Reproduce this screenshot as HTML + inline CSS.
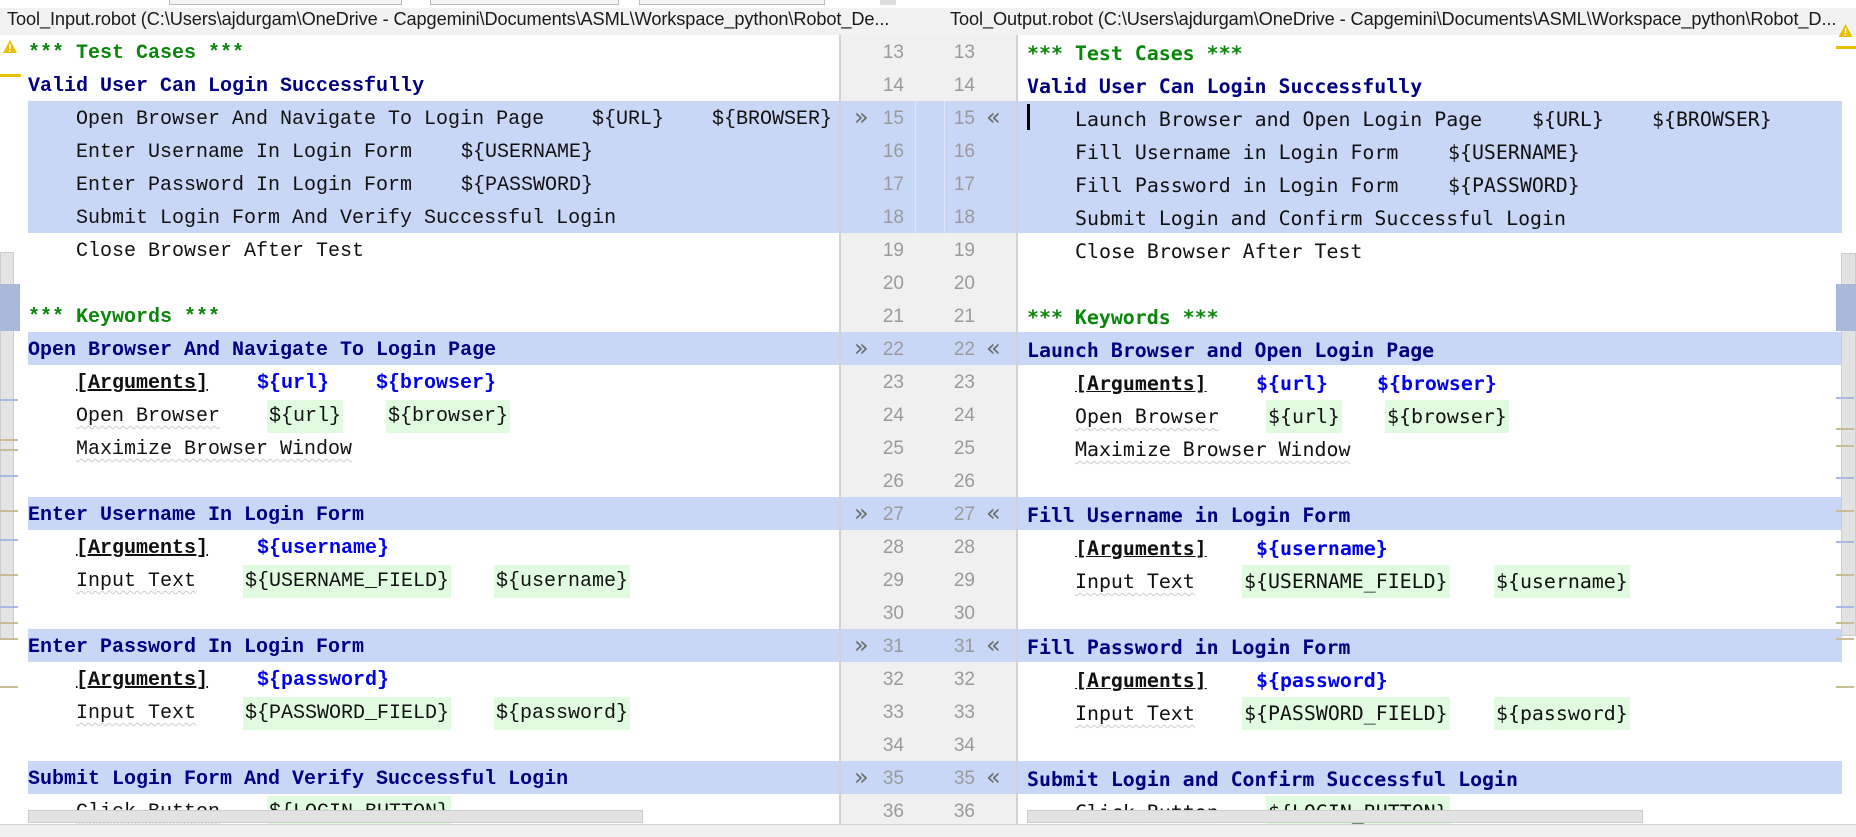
<!DOCTYPE html>
<html><head><meta charset="utf-8"><style>
*{margin:0;padding:0;box-sizing:border-box}
body{width:1856px;height:837px;overflow:hidden;background:#fff;position:relative;font-family:"Liberation Mono",monospace}
.abs{position:absolute}
.tb{position:absolute;top:0;height:5px;border:1px solid #bbb;border-top:none;background:#f4f4f4}
.title{position:absolute;top:8px;height:27px;background:#f2f2f2;width:1856px}
.tt{position:absolute;top:9px;font-family:"Liberation Sans",sans-serif;font-size:18.2px;color:#1a1a1a;white-space:nowrap;letter-spacing:-0.1px}
.hl{position:absolute;height:33px;background:#c9d7f6}
.t{position:absolute;top:0;height:33px;line-height:33px;font-size:20px;white-space:pre;color:#111;margin-top:2px}
.L{font-family:"Liberation Mono",monospace}
.R{font-family:"DejaVu Sans Mono","Liberation Mono",monospace;font-size:19.9px}
.g{color:#0a860a;font-weight:bold}
.n{color:#000080;font-weight:bold}
.b{color:#0000ee;font-weight:bold}
.a{font-weight:bold;text-decoration:underline}
.v{background:#e1fbe1;padding:0 2px;margin-left:-2px}
.w{text-decoration:underline wavy #ccc 1px;text-underline-offset:4px}
.num{position:absolute;height:33px;font-family:"Liberation Sans",sans-serif;font-size:19px;line-height:35px;color:#9a9a9a;text-align:right;width:32px}
.arr{position:absolute;height:33px;font-family:"DejaVu Sans",sans-serif;font-size:24px;line-height:32px;color:#6a6a6a}
.mk{position:absolute;height:2px;width:18px}
</style></head><body>

<div class="tb" style="left:169px;width:233px"></div>
<div class="tb" style="left:430px;width:189px"></div>
<div class="tb" style="left:639px;width:186px"></div>
<div class="tb" style="left:880px;width:16px;background:#ddd;border:none"></div>

<div class="title"></div>
<div class="tt" style="left:7px">Tool_Input.robot (C:\Users\ajdurgam\OneDrive - Capgemini\Documents\ASML\Workspace_python\Robot_De...</div>
<div class="tt" style="left:950px">Tool_Output.robot (C:\Users\ajdurgam\OneDrive - Capgemini\Documents\ASML\Workspace_python\Robot_D...</div>

<div class="abs" style="left:839px;top:35px;width:179px;height:789px;background:#f0f0f0"></div>

<div class="hl" style="left:28px;top:101px;width:1814px;height:132px"></div>
<div class="hl" style="left:28px;top:332px;width:1814px"></div>
<div class="hl" style="left:28px;top:497px;width:1814px"></div>
<div class="hl" style="left:28px;top:629px;width:1814px"></div>
<div class="hl" style="left:28px;top:761px;width:1814px"></div>
<div class="abs" style="left:915px;top:101px;width:1px;height:132px;background:#dde6fa"></div>
<div class="abs" style="left:944px;top:101px;width:1px;height:132px;background:#dde6fa"></div>
<div class="abs" style="left:839px;top:35px;width:2px;height:789px;background:#d2d2d2"></div>
<div class="abs" style="left:1016px;top:35px;width:2px;height:789px;background:#d2d2d2"></div>

<div class="num" style="left:872px;top:35px">13</div><div class="num" style="left:943px;top:35px">13</div>
<div class="num" style="left:872px;top:68px">14</div><div class="num" style="left:943px;top:68px">14</div>
<div class="num" style="left:872px;top:101px">15</div><div class="num" style="left:943px;top:101px">15</div>
<div class="num" style="left:872px;top:134px">16</div><div class="num" style="left:943px;top:134px">16</div>
<div class="num" style="left:872px;top:167px">17</div><div class="num" style="left:943px;top:167px">17</div>
<div class="num" style="left:872px;top:200px">18</div><div class="num" style="left:943px;top:200px">18</div>
<div class="num" style="left:872px;top:233px">19</div><div class="num" style="left:943px;top:233px">19</div>
<div class="num" style="left:872px;top:266px">20</div><div class="num" style="left:943px;top:266px">20</div>
<div class="num" style="left:872px;top:299px">21</div><div class="num" style="left:943px;top:299px">21</div>
<div class="num" style="left:872px;top:332px">22</div><div class="num" style="left:943px;top:332px">22</div>
<div class="num" style="left:872px;top:365px">23</div><div class="num" style="left:943px;top:365px">23</div>
<div class="num" style="left:872px;top:398px">24</div><div class="num" style="left:943px;top:398px">24</div>
<div class="num" style="left:872px;top:431px">25</div><div class="num" style="left:943px;top:431px">25</div>
<div class="num" style="left:872px;top:464px">26</div><div class="num" style="left:943px;top:464px">26</div>
<div class="num" style="left:872px;top:497px">27</div><div class="num" style="left:943px;top:497px">27</div>
<div class="num" style="left:872px;top:530px">28</div><div class="num" style="left:943px;top:530px">28</div>
<div class="num" style="left:872px;top:563px">29</div><div class="num" style="left:943px;top:563px">29</div>
<div class="num" style="left:872px;top:596px">30</div><div class="num" style="left:943px;top:596px">30</div>
<div class="num" style="left:872px;top:629px">31</div><div class="num" style="left:943px;top:629px">31</div>
<div class="num" style="left:872px;top:662px">32</div><div class="num" style="left:943px;top:662px">32</div>
<div class="num" style="left:872px;top:695px">33</div><div class="num" style="left:943px;top:695px">33</div>
<div class="num" style="left:872px;top:728px">34</div><div class="num" style="left:943px;top:728px">34</div>
<div class="num" style="left:872px;top:761px">35</div><div class="num" style="left:943px;top:761px">35</div>
<div class="num" style="left:872px;top:794px">36</div><div class="num" style="left:943px;top:794px">36</div>

<div class="arr" style="left:854px;top:101px">»</div><div class="arr" style="left:986px;top:101px">«</div>
<div class="arr" style="left:854px;top:332px">»</div><div class="arr" style="left:986px;top:332px">«</div>
<div class="arr" style="left:854px;top:497px">»</div><div class="arr" style="left:986px;top:497px">«</div>
<div class="arr" style="left:854px;top:629px">»</div><div class="arr" style="left:986px;top:629px">«</div>
<div class="arr" style="left:854px;top:761px">»</div><div class="arr" style="left:986px;top:761px">«</div>

<div class="t L g" style="left:28px;top:35px">*** Test Cases ***</div>
<div class="t L n" style="left:28px;top:68px">Valid User Can Login Successfully</div>
<div class="t L" style="left:76px;top:101px">Open Browser And Navigate To Login Page</div>
<div class="t L" style="left:592px;top:101px">${URL}</div>
<div class="t L" style="left:712px;top:101px">${BROWSER}</div>
<div class="t L" style="left:76px;top:134px">Enter Username In Login Form</div>
<div class="t L" style="left:461px;top:134px">${USERNAME}</div>
<div class="t L" style="left:76px;top:167px">Enter Password In Login Form</div>
<div class="t L" style="left:461px;top:167px">${PASSWORD}</div>
<div class="t L" style="left:76px;top:200px">Submit Login Form And Verify Successful Login</div>
<div class="t L" style="left:76px;top:233px">Close Browser After Test</div>
<div class="t L g" style="left:28px;top:299px">*** Keywords ***</div>
<div class="t L n" style="left:28px;top:332px">Open Browser And Navigate To Login Page</div>
<div class="t L a" style="left:76px;top:365px">[Arguments]</div>
<div class="t L b" style="left:257px;top:365px">${url}</div>
<div class="t L b" style="left:376px;top:365px">${browser}</div>
<div class="t L w" style="left:76px;top:398px">Open Browser</div>
<div class="t L v" style="left:269px;top:398px">${url}</div>
<div class="t L v" style="left:388px;top:398px">${browser}</div>
<div class="t L w" style="left:76px;top:431px">Maximize Browser Window</div>
<div class="t L n" style="left:28px;top:497px">Enter Username In Login Form</div>
<div class="t L a" style="left:76px;top:530px">[Arguments]</div>
<div class="t L b" style="left:257px;top:530px">${username}</div>
<div class="t L w" style="left:76px;top:563px">Input Text</div>
<div class="t L v" style="left:245px;top:563px">${USERNAME_FIELD}</div>
<div class="t L v" style="left:496px;top:563px">${username}</div>
<div class="t L n" style="left:28px;top:629px">Enter Password In Login Form</div>
<div class="t L a" style="left:76px;top:662px">[Arguments]</div>
<div class="t L b" style="left:257px;top:662px">${password}</div>
<div class="t L w" style="left:76px;top:695px">Input Text</div>
<div class="t L v" style="left:245px;top:695px">${PASSWORD_FIELD}</div>
<div class="t L v" style="left:496px;top:695px">${password}</div>
<div class="t L n" style="left:28px;top:761px">Submit Login Form And Verify Successful Login</div>
<div class="t L w" style="left:76px;top:794px">Click Button</div>
<div class="t L v" style="left:269px;top:794px">${LOGIN_BUTTON}</div>

<div class="t R g" style="left:1027px;top:35px">*** Test Cases ***</div>
<div class="t R n" style="left:1027px;top:68px">Valid User Can Login Successfully</div>
<div class="abs" style="left:1027px;top:104px;width:3px;height:26px;background:#000"></div>
<div class="t R" style="left:1075px;top:101px">Launch Browser and Open Login Page</div>
<div class="t R" style="left:1532px;top:101px">${URL}</div>
<div class="t R" style="left:1652px;top:101px">${BROWSER}</div>
<div class="t R" style="left:1075px;top:134px">Fill Username in Login Form</div>
<div class="t R" style="left:1448px;top:134px">${USERNAME}</div>
<div class="t R" style="left:1075px;top:167px">Fill Password in Login Form</div>
<div class="t R" style="left:1448px;top:167px">${PASSWORD}</div>
<div class="t R" style="left:1075px;top:200px">Submit Login and Confirm Successful Login</div>
<div class="t R" style="left:1075px;top:233px">Close Browser After Test</div>
<div class="t R g" style="left:1027px;top:299px">*** Keywords ***</div>
<div class="t R n" style="left:1027px;top:332px">Launch Browser and Open Login Page</div>
<div class="t R a" style="left:1075px;top:365px">[Arguments]</div>
<div class="t R b" style="left:1256px;top:365px">${url}</div>
<div class="t R b" style="left:1377px;top:365px">${browser}</div>
<div class="t R w" style="left:1075px;top:398px">Open Browser</div>
<div class="t R v" style="left:1268px;top:398px">${url}</div>
<div class="t R v" style="left:1387px;top:398px">${browser}</div>
<div class="t R w" style="left:1075px;top:431px">Maximize Browser Window</div>
<div class="t R n" style="left:1027px;top:497px">Fill Username in Login Form</div>
<div class="t R a" style="left:1075px;top:530px">[Arguments]</div>
<div class="t R b" style="left:1256px;top:530px">${username}</div>
<div class="t R w" style="left:1075px;top:563px">Input Text</div>
<div class="t R v" style="left:1244px;top:563px">${USERNAME_FIELD}</div>
<div class="t R v" style="left:1496px;top:563px">${username}</div>
<div class="t R n" style="left:1027px;top:629px">Fill Password in Login Form</div>
<div class="t R a" style="left:1075px;top:662px">[Arguments]</div>
<div class="t R b" style="left:1256px;top:662px">${password}</div>
<div class="t R w" style="left:1075px;top:695px">Input Text</div>
<div class="t R v" style="left:1244px;top:695px">${PASSWORD_FIELD}</div>
<div class="t R v" style="left:1496px;top:695px">${password}</div>
<div class="t R n" style="left:1027px;top:761px">Submit Login and Confirm Successful Login</div>
<div class="t R w" style="left:1075px;top:794px">Click Button</div>
<div class="t R v" style="left:1268px;top:794px">${LOGIN_BUTTON}</div>

<svg class="abs" style="left:2px;top:39px" width="16" height="15" viewBox="0 0 16 15"><path d="M8 1 L15 14 L1 14 Z" fill="#e8c000"/><rect x="7.2" y="5" width="1.6" height="5" fill="#fff"/><rect x="7.2" y="11" width="1.6" height="1.6" fill="#fff"/></svg>
<div class="abs" style="left:0;top:74px;width:21px;height:3px;background:#e8c000"></div>
<div class="abs" style="left:0;top:252px;width:14px;height:387px;background:#e4e4e4;border:1px solid #ccc"></div>
<div class="abs" style="left:0;top:284px;width:20px;height:47px;background:#a9b9dc"></div>
<div class="mk" style="left:0;top:399px;background:#a9b9e6"></div>
<div class="mk" style="left:0;top:439px;background:#c9bd96"></div>
<div class="mk" style="left:0;top:449px;background:#c9bd96"></div>
<div class="mk" style="left:0;top:475px;background:#a9b9e6"></div>
<div class="mk" style="left:0;top:510px;background:#c9bd96"></div>
<div class="mk" style="left:0;top:539px;background:#a9b9e6"></div>
<div class="mk" style="left:0;top:574px;background:#c9bd96"></div>
<div class="mk" style="left:0;top:606px;background:#a9b9e6"></div>
<div class="mk" style="left:0;top:622px;background:#c9bd96"></div>
<div class="mk" style="left:0;top:638px;background:#c9bd96"></div>
<div class="mk" style="left:0;top:686px;background:#c9bd96"></div>

<svg class="abs" style="left:1837px;top:23px" width="17" height="15" viewBox="0 0 16 15"><path d="M8 1 L15 14 L1 14 Z" fill="#e8c000"/><rect x="7.2" y="5" width="1.6" height="5" fill="#fff"/><rect x="7.2" y="11" width="1.6" height="1.6" fill="#fff"/></svg>
<div class="abs" style="left:1836px;top:46px;width:20px;height:3px;background:#e8c000"></div>
<div class="abs" style="left:1841px;top:253px;width:15px;height:383px;background:#e2e2e2;border:1px solid #ccc"></div>
<div class="abs" style="left:1836px;top:284px;width:20px;height:47px;background:#a9b9dc"></div>
<div class="mk" style="left:1836px;top:397px;background:#a9b9e6"></div>
<div class="mk" style="left:1836px;top:428px;background:#c9bd96"></div>
<div class="mk" style="left:1836px;top:445px;background:#c9bd96"></div>
<div class="mk" style="left:1836px;top:477px;background:#a9b9e6"></div>
<div class="mk" style="left:1836px;top:510px;background:#c9bd96"></div>
<div class="mk" style="left:1836px;top:541px;background:#a9b9e6"></div>
<div class="mk" style="left:1836px;top:574px;background:#c9bd96"></div>
<div class="mk" style="left:1836px;top:606px;background:#a9b9e6"></div>
<div class="mk" style="left:1836px;top:622px;background:#c9bd96"></div>
<div class="mk" style="left:1836px;top:638px;background:#c9bd96"></div>
<div class="mk" style="left:1836px;top:686px;background:#c9bd96"></div>

<div class="abs" style="left:28px;top:810px;width:615px;height:13px;background:#e2e2e2;border:1px solid #ccc"></div>
<div class="abs" style="left:1027px;top:810px;width:616px;height:13px;background:#e2e2e2;border:1px solid #ccc"></div>

<div class="abs" style="left:0;top:824px;width:1856px;height:13px;background:#f0f0f0;border-top:1px solid #d0d0d0"></div>
</body></html>
